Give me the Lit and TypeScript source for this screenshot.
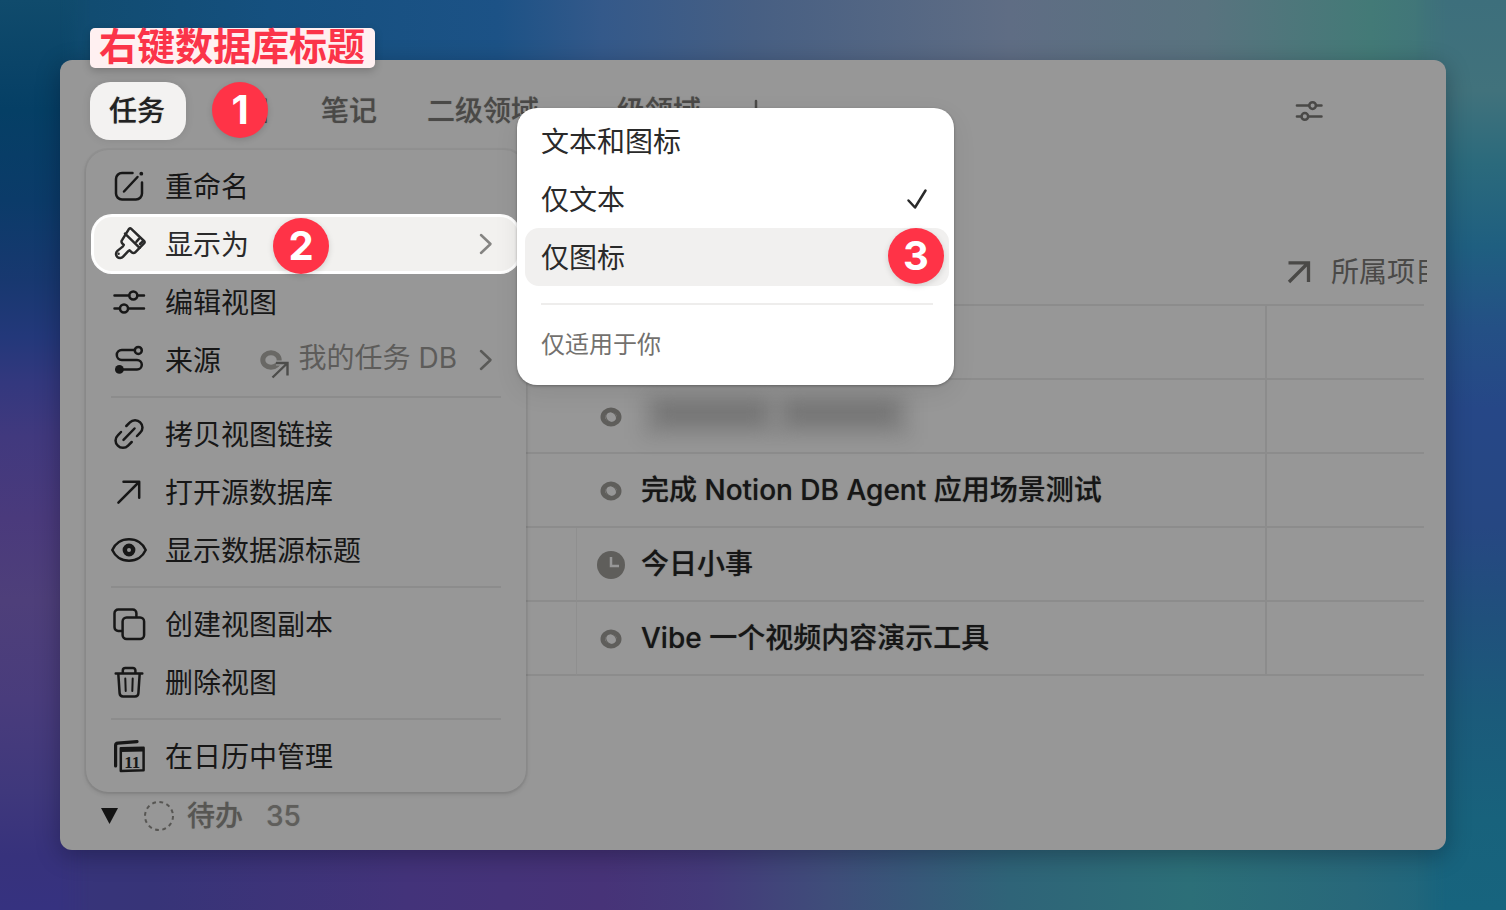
import { LitElement, html, svg, css, nothing } from "lit";
import type { SVGTemplateResult } from "lit";
import { customElement, property, state } from "lit/decorators.js";
import { classMap } from "lit/directives/class-map.js";

const glyphs: Record<string, SVGTemplateResult> = {
  rename: svg`
    <path d="M21.5 5H11a6 6 0 0 0-6 6v14.5a6 6 0 0 0 6 6h14a6 6 0 0 0 6-6V14.5M13 23.5L26.5 9"/>
    <circle cx="30.3" cy="5.7" r="1.9" fill="currentColor" stroke="none"/>`,
  brush: svg`
    <path d="M18 2.9a1.7 1.7 0 0 1 2.3 0L33 15a1.7 1.7 0 0 1 0 2.4l-8.8 9a2.4 2.4 0 0 1-3.4 0l-2.2-2.1-1.8 1.3-4.7 5a4.1 4.1 0 0 1-5.9.2 4.1 4.1 0 0 1 .2-5.9l5.3-4.3 1.1-1.7-1.6-1.6a2.4 2.4 0 0 1 0-3.4z"/>
    <path d="M14 7.6L28.6 21.8M25.5 15.6l2.4-2.7M29 18l2.2-2.2"/>
    <circle cx="7.6" cy="27.8" r="1.2" fill="currentColor" stroke="none"/>`,
  sliders: svg`
    <path d="M3.5 11.5h14.6M26.5 11.5H33M3.5 24.5h5.3M17.2 24.5H33"/>
    <circle cx="22.3" cy="11.5" r="4"/><circle cx="13" cy="24.5" r="4"/>`,
  source: svg`
    <path d="M23.5 8H10.8a5 5 0 0 0 0 10H26a4.8 4.8 0 0 1 0 9.6H10"/>
    <circle cx="27.3" cy="8.4" r="3.5"/>
    <circle cx="8.4" cy="27.4" r="4.4" fill="currentColor" stroke="none"/>`,
  link: svg`
    <path d="M15.3 10l3.6-3.6a7 7 0 0 1 10.3 0 7 7 0 0 1 0 10.3L26 20M20.7 26l-3.6 3.6a7 7 0 0 1-10.3 0 7 7 0 0 1 0-10.3L10 16M12.5 23.8L23.5 12.5"/>`,
  arrow: svg`<path d="M7.4 28.6L28 8M12.5 7.8h15.7v16"/>`,
  eye: svg`
    <path d="M1.3 18C4 12 10 7.3 18 7.3S32 12 34.7 18C32 24 26 28.7 18 28.7S4 24 1.3 18z"/>
    <circle cx="18" cy="18" r="4.2" stroke-width="4.4"/>`,
  copy: svg`
    <path d="M10.5 25H7.2A3.7 3.7 0 0 1 3.5 21.3V7.2A3.7 3.7 0 0 1 7.2 3.5h14.5a3.7 3.7 0 0 1 3.7 3.7v3"/>
    <rect x="11.6" y="11.5" width="21.5" height="21.5" rx="4"/>`,
  trash: svg`
    <path d="M4.7 9.5h26.6M11.8 9V6.5a2.5 2.5 0 0 1 2.5-2.5h7.6a2.5 2.5 0 0 1 2.5 2.5V9M7.3 9.7l1.3 19.5a3.5 3.5 0 0 0 3.5 3.3h11.8a3.5 3.5 0 0 0 3.5-3.3l1.3-19.5"/>
    <path d="M14.3 14.5l.4 12.5M21.7 14.5l-.4 12.5" stroke-width="2"/>`,
  calendar: svg`
    <path d="M4.6 28V7.6a2.4 2.4 0 0 1 2.2-2.4L26 3.7" stroke-width="3.2"/>
    <path d="M9.8 10.200L32.600 9.700V32.200L9.800 32.900z"/>
    <path d="M9.600 11.800L32.800 11.400" stroke-width="4.200" stroke-linecap="butt"/>
    <text x="21.200" y="29.500" text-anchor="middle" font-family="Liberation Serif, serif" font-weight="700" font-size="17" fill="currentColor" stroke="none">11</text>`,
};

const icon = (name: string, cls = "icon") => svg`
  <svg class=${cls} viewBox="0 0 36 36" aria-hidden="true">${glyphs[name]}</svg>`;

const chevron = html`
  <svg class="chevron" viewBox="0 0 16 24" aria-hidden="true"><path d="M3 3l9.500 9L3 21"/></svg>`;

const ring = svg`
  <ellipse cx="14" cy="14" rx="8.200" ry="7.200" fill="none" stroke="currentColor" stroke-width="4.600"/>
  <ellipse cx="14.200" cy="14" rx="5.900" ry="4.900" transform="rotate(48 14 14)" fill="none" stroke="currentColor" stroke-width="1"/>`;

const clock = svg`
  <circle cx="14" cy="14" r="14" fill="currentColor"/>
  <path class="hands" d="M14 6v9h8"/>`;

interface MenuEntry {
  icon: string;
  label: string;
  value?: string;
  submenu?: boolean;
}

const menuGroups: MenuEntry[][] = [
  [
    { icon: "rename", label: "重命名" },
    { icon: "brush", label: "显示为", submenu: true },
    { icon: "sliders", label: "编辑视图" },
    { icon: "source", label: "来源", value: "我的任务 DB" },
  ],
  [
    { icon: "link", label: "拷贝视图链接" },
    { icon: "arrow", label: "打开源数据库" },
    { icon: "eye", label: "显示数据源标题" },
  ],
  [
    { icon: "copy", label: "创建视图副本" },
    { icon: "trash", label: "删除视图" },
  ],
  [{ icon: "calendar", label: "在日历中管理" }],
];

interface Task {
  kind: "none" | "ring" | "clock";
  title?: string;
  redacted?: boolean;
  nested?: boolean;
}

const tasks: Task[] = [
  { kind: "none" },
  { kind: "ring", redacted: true },
  { kind: "ring", title: "完成 Notion DB Agent 应用场景测试" },
  { kind: "clock", title: "今日小事", nested: true },
  { kind: "ring", title: "Vibe 一个视频内容演示工具", nested: true },
];

const shared = css`
  *, *::before, *::after { box-sizing: border-box; }
  button {
    margin: 0;
    padding: 0;
    border: 0;
    background: none;
    color: inherit;
    font: inherit;
    text-align: left;
    white-space: nowrap;
  }
  ul { margin: 0; padding: 0; list-style: none; }
  svg { display: block; flex: none; overflow: visible; }
  .icon, .chevron, .check {
    fill: none;
    stroke: currentColor;
    stroke-width: 2.5;
    stroke-linecap: round;
    stroke-linejoin: round;
  }
  .icon { width: 36px; height: 36px; }
  .medium { font-weight: 500; text-shadow: 0 0 1px color-mix(in srgb, currentColor 50%, transparent); }
`;

@customElement("step-badge")
export class StepBadge extends LitElement {
  @property({ type: Number }) step = 1;

  static styles = css`
    :host {
      display: flex;
      align-items: center;
      justify-content: center;
      width: 56px;
      height: 56px;
      border-radius: 50%;
      background: #ff3347;
      box-shadow: 0 2px 6px rgba(0, 0, 0, 0.14);
      color: #fff;
      font: 700 40px/56px Inter, sans-serif;
    }
  `;

  render() {
    return html`${this.step}`;
  }
}

@customElement("display-submenu")
export class DisplaySubmenu extends LitElement {
  @state() private selected = "仅文本";

  static styles = [
    shared,
    css`
      :host {
        display: block;
        width: 437px;
        padding: 4px 5px 19px 8px;
        border-radius: 20px;
        background: #fff;
        box-shadow: 0 1px 3px rgba(0, 0, 0, 0.3), 0 8px 24px rgba(0, 0, 0, 0.08);
        color: #2a2a2a;
      }
      .row { position: relative; }
      .option {
        display: flex;
        align-items: center;
        justify-content: space-between;
        width: 100%;
        height: 58px;
        padding: 2px 20px 0 16px;
        border-radius: 14px;
      }
      .hover { background: #f1f0ef; }
      .check { width: 24px; height: 24px; }
      .rule { height: 2px; margin: 17px 16px 0; background: #eeedec; }
      .note {
        margin: 20px 16px 0;
        padding-bottom: 1px;
        color: #73716e;
        font-size: 24px;
        line-height: 40px;
      }
      .badge { position: absolute; top: 0; right: 5px; }
    `,
  ];

  render() {
    const options = ["文本和图标", "仅文本", "仅图标"];
    return html`
      <ul>
        ${options.map(
          (o) => html`
            <li class="row">
              <button class=${classMap({ option: true, hover: o === "仅图标" })} @click=${() => (this.selected = o)}>
                ${o}
                ${o === this.selected
                  ? html`<svg class="check" viewBox="0 0 24 24" aria-hidden="true"><path d="M3.500 12.500l6.500 7L20.500 2.500"/></svg>`
                  : nothing}
              </button>
              ${o === "仅图标" ? html`<step-badge class="badge" .step=${3}></step-badge>` : nothing}
            </li>
          `
        )}
      </ul>
      <div class="rule"></div>
      <p class="note">仅适用于你</p>
    `;
  }
}

@customElement("view-menu")
export class ViewMenu extends LitElement {
  static styles = [
    shared,
    css`
      :host {
        display: block;
        width: 440px;
        padding: 7px 6px;
        border-radius: 22px;
        background: #979797;
        box-shadow: 0 0 0 2px rgba(0, 0, 0, 0.03), 0 2px 5px rgba(0, 0, 0, 0.14);
        color: #171717;
      }
      .group + .group::before {
        content: "";
        display: block;
        height: 2px;
        margin: 7px 19px;
        background: #8c8c8c;
      }
      .row { position: relative; }
      .item {
        display: flex;
        align-items: center;
        width: 100%;
        height: 58px;
        padding: 0 26px 0 19px;
        border-radius: 20px;
      }
      .label { margin-left: 18px; padding-top: 2px; }
      .active {
        background: #f2f1ef;
        box-shadow: inset 0 0 0 2px #fff, 0 0 0 1px #fff;
        color: #2a2a2a;
      }
      .value {
        display: flex;
        align-items: center;
        gap: 9px;
        margin: 0 21px 4px auto;
        color: #5d5c5a;
      }
      .db { width: 30px; height: 28px; margin-top: 8px; color: #696865; }
      .chevron { width: 16px; height: 24px; color: #5a5a58; }
      .active .chevron { margin-left: auto; color: #858482; }
      .badge { position: absolute; top: 3px; left: 181px; }
      .submenu { position: absolute; z-index: 1; top: -107px; left: 425px; }
    `,
  ];

  private renderEntry(e: MenuEntry) {
    return html`
      <li class="row">
        <button class=${classMap({ item: true, active: !!e.submenu })}>
          ${icon(e.icon)}
          <span class="label">${e.label}</span>
          ${e.value
            ? html`<span class="value">
                <svg class="db" viewBox="0 0 30 28" aria-hidden="true">
                  <ellipse cx="11" cy="12" rx="8.200" ry="7.200" fill="none" stroke="currentColor" stroke-width="5"/>
                  <path d="M12 29L26 15.500M16 15h11v12" fill="none" stroke="#979797" stroke-width="5"/>
                  <path d="M12.500 29.500L27 15.500M16 15h11.500v12.500" fill="none" stroke="#4d4d4b" stroke-width="2.400"/>
                </svg>
                ${e.value}
              </span>`
            : nothing}
          ${e.value || e.submenu ? chevron : nothing}
        </button>
        ${e.submenu
          ? html`<step-badge class="badge" .step=${2}></step-badge>
              <display-submenu class="submenu"></display-submenu>`
          : nothing}
      </li>
    `;
  }

  render() {
    return menuGroups.map((g) => html`<ul class="group">${g.map((e) => this.renderEntry(e))}</ul>`);
  }
}

@customElement("task-table")
export class TaskTable extends LitElement {
  static styles = [
    shared,
    css`
      :host { display: block; color: #161616; }
      table {
        width: 100%;
        border-collapse: separate;
        border-spacing: 0;
        table-layout: fixed;
      }
      .lead { width: 487px; }
      .project { width: 157px; }
      th { height: 67px; padding: 0; font-weight: 400; }
      td { height: 74px; padding: 0; }
      th, td { border-bottom: 2px solid #8c8c8c; }
      .nested { border-right: 1px solid #8f8f8f; }
      .task { border-right: 2px solid #8c8c8c; }
      .heading, .title {
        display: flex;
        align-items: center;
        padding-left: 20px;
        white-space: nowrap;
      }
      .heading { gap: 20px; margin-right: -3px; overflow: hidden; color: #4a4947; }
      .out { width: 24px; height: 24px; fill: none; stroke: currentColor; stroke-width: 3.300; }
      .title { gap: 16px; }
      .kind { width: 28px; height: 28px; margin-top: 2px; color: #5f5e5b; }
      .hands { fill: none; stroke: #979797; stroke-width: 2.500; }
      .redacted {
        display: flex;
        gap: 18px;
        padding: 8px 14px 14px;
        height: 46px;
        background: rgba(0, 0, 0, 0.09);
        filter: blur(9px);
      }
      .smudge { width: 112px; background: #757575; }
    `,
  ];

  render() {
    return html`
      <table>
        <colgroup><col class="lead" /><col /><col class="project" /></colgroup>
        <thead>
          <tr>
            <th></th>
            <th></th>
            <th scope="col">
              <div class="heading">
                <svg class="out" viewBox="0 0 24 24" aria-hidden="true"><path d="M2 22L21 3M1.500 2.800h20V22"/></svg>
                <span>所属项目</span>
              </div>
            </th>
          </tr>
        </thead>
        <tbody>
          ${tasks.map(
            (t) => html`
              <tr>
                <td class=${classMap({ nested: !!t.nested })}></td>
                <td class="task">
                  <div class="title medium">
                    ${t.kind === "none"
                      ? nothing
                      : html`<svg class="kind" viewBox="0 0 28 28" aria-hidden="true">${t.kind === "ring" ? ring : clock}</svg>`}
                    ${t.redacted
                      ? html`<span class="redacted"><span class="smudge"></span><span class="smudge"></span></span>`
                      : t.title}
                  </div>
                </td>
                <td></td>
              </tr>
            `
          )}
        </tbody>
      </table>
    `;
  }
}

@customElement("app-root")
export class AppRoot extends LitElement {
  static styles = [
    shared,
    css`
      :host {
        display: block;
        box-sizing: border-box;
        position: relative;
        isolation: isolate;
        overflow: hidden;
        min-height: 100vh;
        padding: 60px;
        font: 400 28px/40px Inter, "Noto Sans CJK SC", sans-serif;
        background: linear-gradient(90deg, #0f4a6a 0%, #15507f 18%, #1c5286 33%, #34598a 40%, #475f83 50%, #5f6d84 67%, #59737f 80%, #437a77 91%, #3d6f7c 100%);
      }
      .glow { position: absolute; z-index: -1; }
      .bottom {
        inset: 50% 0 0;
        background: linear-gradient(90deg, #37347c 0%, #373478 10%, #43337a 27%, #473378 40%, #443a7a 47%, #3f4d7a 55%, #2f6478 67%, #2c6f78 79%, #28687a 90%, #17647e 100%);
      }
      .left {
        inset: 0 auto 0 0;
        width: 90px;
        background: linear-gradient(180deg, #104b6c 0%, #0a4468 7%, #053f65 12%, #0b3b69 22%, #183870 31%, #23387a 37%, #33387e 42%, #41397e 48%, #4a3a7c 57%, #4e3f7a 66%, #493c7c 77%, #3f387c 87%, #37327c 94%, #363280 100%);
        mask-image: linear-gradient(90deg, #000 66%, transparent);
      }
      .right {
        inset: 0 0 0 auto;
        width: 90px;
        background: linear-gradient(180deg, #3d6f7c 0%, #41727c 10%, #2b6a7c 18%, #1f5f80 27%, #245085 36%, #264787 45%, #264782 58%, #20507c 68%, #1b5a7a 78%, #18627c 90%, #17647e 100%);
        mask-image: linear-gradient(270deg, #000 66%, transparent);
      }
      .panel {
        position: relative;
        padding: 22px 22px 14px 30px;
        border-radius: 12px;
        background: #979797;
        box-shadow: 0 6px 24px rgba(0, 0, 20, 0.3);
      }
      .callout {
        position: absolute;
        top: -32px;
        left: 30px;
        height: 40px;
        margin: 0;
        padding: 0 10px 0 9px;
        border-radius: 5px;
        background: #fff0f1;
        box-shadow: 0 3px 8px rgba(0, 0, 0, 0.2);
        color: #fb3449;
        font-size: 38px;
        font-weight: 700;
        line-height: 36px;
        white-space: nowrap;
      }
      .toolbar {
        display: flex;
        align-items: center;
        justify-content: space-between;
        padding-right: 100px;
        color: #4a4947;
      }
      .tabs { display: flex; align-items: center; gap: 10px; }
      .anchor { position: relative; }
      .tab { height: 58px; padding: 0 21px 0 19px; border-radius: 20px; }
      .current { background: #f3f2f1; color: #222; box-shadow: 0 0 8px rgba(0, 0, 0, 0.1); }
      .add { display: flex; padding: 0 11px; }
      .add .icon { width: 26px; height: 26px; }
      .settings .icon { width: 30px; height: 30px; stroke-width: 3; }
      .badge { position: absolute; top: 0; left: 122px; }
      .menu { position: absolute; z-index: 2; top: 68px; left: -4px; }
      .table { display: block; margin-top: 99px; }
      .group {
        display: flex;
        align-items: center;
        margin-top: 120px;
        padding-left: 11px;
        color: #575653;
      }
      .caret { width: 17px; height: 16px; fill: #141414; }
      .dashed { width: 30px; height: 30px; margin: 0 13px 0 26px; fill: none; stroke: currentColor; stroke-width: 2; stroke-dasharray: 3.800 3.530; }
      .count { margin-left: 23px; color: #5f5e5b; }
    `,
  ];

  render() {
    return html`
      <div class="glow bottom"></div>
      <div class="glow left"></div>
      <div class="glow right"></div>
      <main class="panel">
        <p class="callout">右键数据库标题</p>
        <div class="toolbar">
          <nav class="tabs">
            <div class="anchor">
              <button class="tab current medium">任务</button>
              <step-badge class="badge" .step=${1}></step-badge>
              <view-menu class="menu"></view-menu>
            </div>
            ${["项目", "笔记", "二级领域", "一级领域"].map((t) => html`<button class="tab medium">${t}</button>`)}
            <button class="add" aria-label="添加视图">
              <svg class="icon" viewBox="0 0 26 26" aria-hidden="true"><path d="M13 3v20M3 13h20"/></svg>
            </button>
          </nav>
          <button class="settings" aria-label="视图设置">${icon("sliders")}</button>
        </div>
        <task-table class="table"></task-table>
        <button class="group medium">
          <svg class="caret" viewBox="0 0 17 16" aria-hidden="true"><path d="M0 0h17L8.500 16z"/></svg>
          <svg class="dashed" viewBox="0 0 30 30" aria-hidden="true"><circle cx="15" cy="15" r="14"/></svg>
          待办
          <span class="count">35</span>
        </button>
      </main>
    `;
  }
}
